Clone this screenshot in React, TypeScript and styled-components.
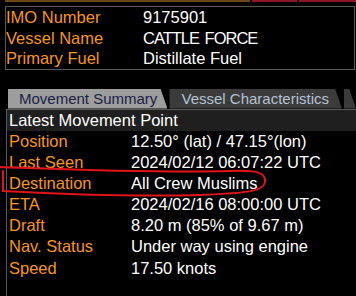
import styled, { createGlobalStyle } from "styled-components";

const GlobalStyle = createGlobalStyle`
  html, body {
    margin: 0;
    background: #000;
  }
  body {
    font-family: "Liberation Sans", Arial, sans-serif;
    font-size: 16.5px;
  }
`;

const Screen = styled.div`
  position: relative;
  width: 356px;
  height: 296px;
  overflow: hidden;
  background: #000;
`;

const TopStrip = styled.div`
  display: flex;
  gap: 2px;
  height: 2px;
  padding-left: 5px;
`;

const StripSeg = styled.div<{ $color: string; $width?: number }>`
  background: ${(p) => p.$color};
  ${(p) => (p.$width ? `width: ${p.$width}px;` : "flex: 1;")}
`;

const InfoBox = styled.div`
  margin: 4px 1px 0 5px;
  border: 1px solid #5a5a5a;
`;

const InfoRow = styled.div`
  display: grid;
  grid-template-columns: 137px 1fr;
  height: 20.5px;
  line-height: 20.5px;
  white-space: nowrap;
`;

const Label = styled.span`
  color: #f7961f;
`;

const Value = styled.span<{ $tight?: boolean }>`
  color: #fff;
  letter-spacing: ${(p) => (p.$tight ? "-1px" : "normal")};
  word-spacing: ${(p) => (p.$tight ? "2px" : "normal")};
`;

const TabBar = styled.div`
  display: flex;
  gap: 2px;
  height: 20px;
  margin-top: 19px;
  padding-left: 8px;
  font-size: 15px;
`;

const Tab = styled.div<{ $active?: boolean; $width?: number }>`
  ${(p) => (p.$width ? `width: ${p.$width}px;` : "flex: 1;")}
  padding-left: ${(p) => (p.$active ? 11 : 12)}px;
  line-height: 20px;
  white-space: nowrap;
  overflow: hidden;
  background: ${(p) => (p.$active ? "#9d9d9d" : "#3b3b3b")};
  color: ${(p) => (p.$active ? "#1b1d45" : "#b4c3d3")};
  clip-path: polygon(0 0, calc(100% - 7px) 0, 100% 100%, 0 100%);
`;

const Panel = styled.div`
  margin-left: 6px;
  border-left: 1px solid #5a5a5a;
  border-top: 1px solid #5a5a5a;
  height: 200px;
`;

const PanelHeader = styled.div`
  height: 21px;
  line-height: 21px;
  padding-left: 2px;
  background: #1f1f1f;
  color: #fff;
`;

const DataRow = styled.div`
  display: grid;
  grid-template-columns: 122px 1fr;
  height: 21.2px;
  line-height: 21.2px;
  padding-left: 2px;
  white-space: nowrap;
`;

const Markup = styled.svg`
  position: absolute;
  left: 0;
  top: 0;
  pointer-events: none;
`;

const vessel: [string, string, boolean?][] = [
  ["IMO Number", "9175901"],
  ["Vessel Name", "CATTLE FORCE", true],
  ["Primary Fuel", "Distillate Fuel"],
];

const movement = [
  ["Position", "12.50° (lat) / 47.15°(lon)"],
  ["Last Seen", "2024/02/12 06:07:22 UTC"],
  ["Destination", "All Crew Muslims"],
  ["ETA", "2024/02/16 08:00:00 UTC"],
  ["Draft", "8.20 m (85% of 9.67 m)"],
  ["Nav. Status", "Under way using engine"],
  ["Speed", "17.50 knots"],
];

export default function App() {
  return (
    <Screen>
      <GlobalStyle />
      <TopStrip>
        <StripSeg $color="#6b4516" $width={245} />
        <StripSeg $color="#8c1526" $width={45} />
        <StripSeg $color="#8c1526" />
      </TopStrip>
      <InfoBox>
        {vessel.map(([k, v, tight]) => (
          <InfoRow key={k}>
            <Label>{k}</Label>
            <Value $tight={tight}>{v}</Value>
          </InfoRow>
        ))}
      </InfoBox>
      <TabBar>
        <Tab $active $width={160}>Movement Summary</Tab>
        <Tab $width={173}>Vessel Characteristics</Tab>
        <Tab />
      </TabBar>
      <Panel>
        <PanelHeader>Latest Movement Point</PanelHeader>
        {movement.map(([k, v]) => (
          <DataRow key={k}>
            <Label>{k}</Label>
            <Value>{v}</Value>
          </DataRow>
        ))}
      </Panel>
      <Markup width="356" height="296" viewBox="0 0 356 296">
        <path
          d="M 0 167 C 60 169, 150 173, 230 171 C 256 170, 266 172, 265 182 C 264 191, 250 193, 200 195 C 120 197, 40 193, 3 191 L 3 171"
          fill="none"
          stroke="#e0141a"
          strokeWidth="2"
          strokeLinecap="round"
        />
      </Markup>
    </Screen>
  );
}
